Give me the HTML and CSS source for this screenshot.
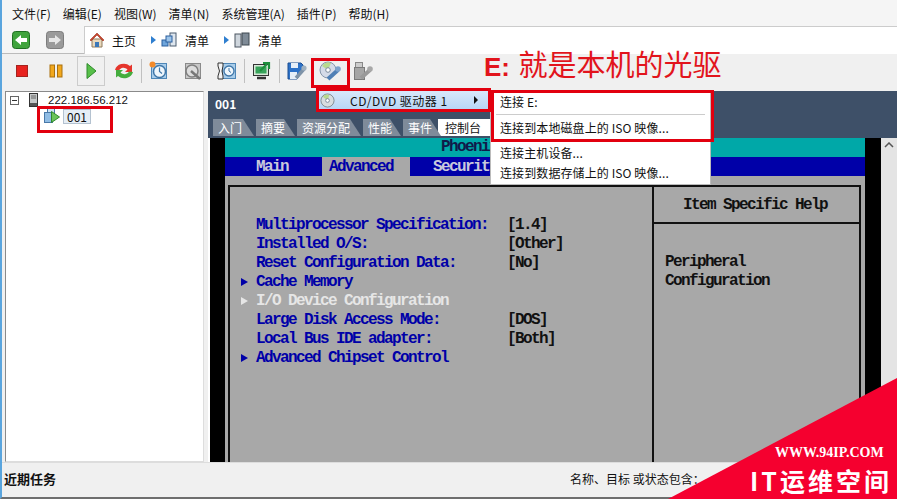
FILE: index.html
```html
<!DOCTYPE html>
<html lang="zh-CN">
<head>
    <meta charset="UTF-8">
    <title>vSphere Client</title>
    <link rel="stylesheet" href="styles.css">
</head>
<body>
<div class="app">
    <div class="menubar">
        <span>文件(F)</span><span>编辑(E)</span><span>视图(W)</span><span>清单(N)</span><span>系统管理(A)</span><span>插件(P)</span><span>帮助(H)</span>
    </div>

    <div class="navbar">
        <svg class="nav-btn" viewBox="0 0 18 18"><rect x="0.5" y="0.5" width="17" height="17" rx="3" fill="#3fa33c" stroke="#1f6e22"/><path d="M3 9 9 4v3h6v4H9v3z" fill="#fff"/></svg>
        <svg class="nav-btn nav-next" viewBox="0 0 18 18"><rect x="0.5" y="0.5" width="17" height="17" rx="3" fill="#9a9a9a" stroke="#7d7d7d"/><path d="M15 9 9 4v3H3v4h6v3z" fill="#e6e6e6"/></svg>
        <div class="crumbs">
            <svg class="crumb-icon" viewBox="0 0 16 16"><path d="M3 7v8h10V7z" fill="#ead9bd" stroke="#8f7a5c"/><path d="M8 1 1 8l1 1 6-6 6 6 1-1z" fill="#c8452f" stroke="#a03420" stroke-width="0.6"/><rect x="6" y="10" width="4" height="5" fill="#3c78b8"/></svg>
            <span class="crumb-home">主页</span>
            <span class="crumb-arrow"></span>
            <svg class="crumb-icon" viewBox="0 0 16 16"><rect x="9" y="1" width="6" height="13" fill="#dfe7ef" stroke="#4b5c70"/><rect x="1" y="8" width="6" height="6" fill="#6fa6dc" stroke="#2a5f9e"/><rect x="5" y="4" width="6" height="6" fill="#9cc4ea" stroke="#2a5f9e"/></svg>
            <span class="crumb-text">清单</span>
            <span class="crumb-arrow"></span>
            <svg class="crumb-icon" viewBox="0 0 16 16"><rect x="1" y="2" width="6" height="13" fill="#cfd6dd" stroke="#4b5560"/><rect x="8" y="1" width="7" height="12" fill="#7f8b97" stroke="#3f4850"/></svg>
            <span class="crumb-text">清单</span>
        </div>
    </div>

    <div class="toolbar">
        <div class="tool"><svg viewBox="0 0 20 20"><rect x="4.500" y="4.500" width="11" height="11" fill="#e8231f" stroke="#a5241f"/></svg></div>
        <div class="tool"><svg viewBox="0 0 20 20"><rect x="4" y="4" width="4.500" height="12" fill="#f2a81d" stroke="#a9700f"/><rect x="11.500" y="4" width="4.500" height="12" fill="#f2a81d" stroke="#a9700f"/></svg></div>
        <div class="tool tool-on"><svg viewBox="0 0 20 20"><path d="M6 2.500 15 10 6 17.500z" fill="#58c04a" stroke="#2f8a2c"/></svg></div>
        <div class="tool"><svg viewBox="0 0 20 20"><path d="M1 9a9 8 0 0 1 15-4l2-1.500V11h-7l2.500-2.500a5 4.500 0 0 0-8.500 1z" fill="#e5352c"/><path d="M19 11a9 8 0 0 1-15 4l-2 1.500V9h7l-2.500 2.500a5 4.500 0 0 0 8.500-1z" fill="#45ad3e"/></svg></div>
        <i class="tool-sep"></i>
        <div class="tool"><svg viewBox="0 0 20 20"><rect x="2.500" y="2.500" width="15" height="15" fill="#a9cdea" stroke="#4f87b7"/><circle cx="10.500" cy="10.500" r="6" fill="#eef6fc" stroke="#3f76a8" stroke-width="1.500"/><path d="M10.500 6.500v4l2.500 2" fill="none" stroke="#3f76a8" stroke-width="1.200"/><circle cx="3.500" cy="3.500" r="3" fill="#f28a2a"/></svg></div>
        <div class="tool"><svg viewBox="0 0 20 20"><rect x="2.500" y="2.500" width="15" height="15" fill="#c8c8c8" stroke="#8a8a8a"/><circle cx="9" cy="10" r="6" fill="#ddd" stroke="#808080" stroke-width="1.500"/><path d="m8 10 9 8" stroke="#777" stroke-width="2.500"/></svg></div>
        <div class="tool"><svg viewBox="0 0 20 20"><rect x="5.500" y="2.500" width="13" height="15" fill="#a9cdea" stroke="#4f87b7"/><path d="M1 2h5v3L5 10l1 5v3H1v-3l1.500-5L1 5z" fill="#f3f3f3" stroke="#333"/><circle cx="12" cy="10" r="5" fill="#eef6fc" stroke="#3f76a8" stroke-width="1.300"/><path d="M12 7v3l2 1.500" fill="none" stroke="#3f76a8"/></svg></div>
        <i class="tool-sep"></i>
        <div class="tool"><svg viewBox="0 0 20 20"><rect x="1.500" y="3.500" width="15" height="11" fill="#d8e8d8" stroke="#333"/><rect x="3.500" y="5.500" width="11" height="7" fill="#37a35a"/><path d="M5 17h9" stroke="#333" stroke-width="2.500"/><path d="M8 10 15 3M11 2h6v6" stroke="#1d8f3c" stroke-width="2.200" fill="none"/></svg></div>
        <i class="tool-sep"></i>
        <div class="tool"><svg viewBox="0 0 20 20"><path d="M1 2h13l2 2v5l-6 9H1z" fill="#2d72c8" stroke="#1c4f92"/><rect x="4" y="2" width="7" height="5" fill="#e7eff8"/><rect x="3" y="11" width="7" height="7" fill="#e7eff8"/><path d="m9 17 8-9" stroke="#7e93a8" stroke-width="3.500"/><circle cx="17" cy="7" r="2.600" fill="#9fb0bf"/></svg></div>
        <div class="tool tool-cd"><svg viewBox="0 0 22 20"><circle cx="9" cy="9" r="8" fill="#d5dbe8" stroke="#8595ab"/><path d="M9 9 3 5a7 7 0 0 1 9-3z" fill="#b9d98e"/><circle cx="9" cy="9" r="2.300" fill="#fff" stroke="#7c8a9c"/><path d="m9 18 10-9" stroke="#4f7fb5" stroke-width="4"/><circle cx="19" cy="8" r="2.800" fill="#7ca2cd"/></svg></div>
        <div class="tool tool-usb"><svg viewBox="0 0 22 20"><rect x="3.500" y="1.500" width="7" height="5" fill="#ccc" stroke="#888"/><rect x="2.500" y="6.500" width="10" height="12" fill="#a5a5a5" stroke="#7a7a7a"/><path d="m9 17 9-8" stroke="#999" stroke-width="4"/><circle cx="18" cy="8" r="2.800" fill="#a8a8a8"/></svg></div>
    </div>

    <div class="main">
        <div class="tree">
            <div class="tree-host">
                <span class="tree-toggle"></span>
                <svg class="tree-server" viewBox="0 0 9 14"><rect x="0.5" y="0.5" width="8" height="13" fill="#c5c8c8" stroke="#333"/><path d="M2 3h5M2 5h5" stroke="#666"/><rect x="1" y="10" width="7" height="3" fill="#555"/></svg>
                <span class="tree-ip">222.186.56.212</span>
            </div>
            <div class="tree-vm">
                <svg viewBox="0 0 16 16"><rect x="3.500" y="0.500" width="7" height="8" fill="#cfe2f3" stroke="#4878a8"/><rect x="0.500" y="4.500" width="8" height="10" fill="#8fbce4" stroke="#4878a8"/><path d="M7.500 3.500 15.500 9l-8 5.500z" fill="#6ac45a" stroke="#2f8a2c"/></svg>
                <span class="tree-label">001</span>
            </div>
        </div>

        <div class="detail">
            <div class="detail-title">001</div>
            <div class="tabs">
                <span class="tab tab-w1">入门</span>
                <span class="tab tab-w2">摘要</span>
                <span class="tab tab-w3">资源分配</span>
                <span class="tab tab-w4">性能</span>
                <span class="tab tab-w4">事件</span>
                <span class="tab tab-on">控制台</span>
            </div>
            <div class="console">
                <div class="bios">
                    <div class="bios-title">Phoenix</div>
                    <div class="bios-menu">
                        <span class="bios-menu-main">Main</span>
                        <span class="bios-menu-on">Advanced</span>
                        <span>Security</span>
                    </div>
                    <div class="bios-body">
                        <div class="bios-frame">
                            <div class="bios-list">
                                <div class="bios-row"><span class="bios-key">Multiprocessor Specification:</span><span class="bios-val">[1.4]</span></div>
                                <div class="bios-row"><span class="bios-key">Installed O/S:</span><span class="bios-val">[Other]</span></div>
                                <div class="bios-row"><span class="bios-key">Reset Configuration Data:</span><span class="bios-val">[No]</span></div>
                                <div class="bios-row bios-sub"><span class="bios-key">Cache Memory</span></div>
                                <div class="bios-row bios-sub bios-sel"><span class="bios-key">I/O Device Configuration</span></div>
                                <div class="bios-row"><span class="bios-key">Large Disk Access Mode:</span><span class="bios-val">[DOS]</span></div>
                                <div class="bios-row"><span class="bios-key">Local Bus IDE adapter:</span><span class="bios-val">[Both]</span></div>
                                <div class="bios-row bios-sub"><span class="bios-key">Advanced Chipset Control</span></div>
                            </div>
                            <div class="bios-help">
                                <div class="bios-help-head">Item Specific Help</div>
                                <div class="bios-help-text">Peripheral<br>Configuration</div>
                            </div>
                        </div>
                    </div>
                </div>
                <div class="scroll"><svg viewBox="0 0 10 6"><path d="M1 5 5 1l4 4" fill="none" stroke="#555" stroke-width="1.500"/></svg></div>
            </div>
        </div>
    </div>

    <div class="tasks">
        <b>近期任务</b>
        <span>名称、目标 或状态包含：</span>
    </div>
</div>

<div class="ctx-menu">
    <svg viewBox="0 0 16 16"><circle cx="8" cy="8" r="7" fill="#d8dde0" stroke="#7e8a90"/><path d="M8 8 3 4a6 6 0 0 1 7-2z" fill="#b9d98e"/><circle cx="8" cy="8" r="2" fill="#fff" stroke="#7c8a9c"/></svg>
    <span>CD/DVD 驱动器 1</span>
    <i class="ctx-arrow"></i>
</div>
<div class="sub-menu">
    <div class="sub-item sub-first">连接 E:</div>
    <hr>
    <div class="sub-item">连接到本地磁盘上的 ISO 映像...</div>
    <div class="sub-gap"></div>
    <div class="sub-item">连接主机设备...</div>
    <div class="sub-item">连接到数据存储上的 ISO 映像...</div>
</div>

<div class="mark mark-cd"></div>
<div class="mark mark-menu"></div>
<div class="mark mark-sub"></div>
<div class="mark mark-vm"></div>
<div class="note"><b>E:</b> 就是本机的光驱</div>

<div class="stamp">
    <div class="stamp-url">WWW.94IP.COM</div>
    <div class="stamp-name">IT运维空间</div>
</div>
</body>
</html>
```

FILE: styles.css
```css
* {
    box-sizing: border-box;
}
html, body {
    margin: 0;
    height: 499px;
    overflow: hidden;
}
body {
    font-family: "Noto Sans CJK SC", "Liberation Sans", sans-serif;
    font-size: 12px;
    color: #111;
    background-color: #f0f0f0;
}
.app {
    width: 897px;
    height: 499px;
    display: flex;
    flex-direction: column;
    border-left: 2px solid #5aa5de;
    border-bottom: 2px solid #6e6e6e;
}

/* top bars */
.menubar {
    height: 26px;
    display: flex;
    align-items: center;
    gap: 12px;
    padding-left: 10px;
    background-color: #f5f5f5;
}
.navbar {
    height: 28px;
    display: flex;
    align-items: center;
    padding-left: 10px;
    background-color: #f5f5f5;
    border-bottom: 1px solid #bbb;
}
.nav-btn {
    width: 18px;
    height: 18px;
}
.nav-next {
    margin-left: 16px;
}
.crumbs {
    flex: 1;
    height: 28px;
    margin-left: 20px;
    display: flex;
    align-items: center;
    background-color: #fff;
    border-left: 1px solid #ccc;
    border-top: 1px solid #ccc;
    padding-left: 4px;
}
.crumb-icon {
    width: 16px;
    height: 16px;
}
.crumb-home {
    margin-left: 7px;
}
.crumb-text {
    margin-left: 8px;
}
.crumb-arrow {
    width: 0;
    height: 0;
    margin: 0 5px 0 15px;
    border-left: 5px solid #2f7fd0;
    border-top: 4px solid transparent;
    border-bottom: 4px solid transparent;
}
.toolbar {
    height: 34px;
    display: flex;
    align-items: center;
    padding-left: 3px;
    background-color: #f0f0f0;
}
.tool {
    width: 34px;
    height: 30px;
    display: flex;
    align-items: center;
    justify-content: center;
}
.tool svg {
    width: 20px;
    height: 20px;
}
.tool-on {
    width: 28px;
    margin: 0 2px 0 4px;
    border: 1px solid #ccc;
}
.tool-cd, .tool-usb {
    margin-left: -1px;
}
.tool-cd svg, .tool-usb svg {
    width: 22px;
}
.tool-sep {
    width: 1px;
    height: 24px;
    background-color: #c0c0c0;
}

/* tree and detail */
.main {
    flex: 1;
    min-height: 0;
    display: flex;
    padding: 3px 0 0 3px;
}
.tree {
    width: 199px;
    border: 1px solid #8a8a8a;
    border-right-color: #ddd;
    border-bottom-color: #ddd;
    background-color: #fff;
    padding: 1px 0 0 4px;
}
.tree-host {
    display: flex;
    align-items: center;
    height: 14px;
}
.tree-ip {
    font-size: 11.5px;
    font-family: "Liberation Sans", sans-serif;
}
.tree-toggle {
    width: 9px;
    height: 9px;
    border: 1px solid #666;
    background: linear-gradient(#333, #333) center / 5px 1px no-repeat;
}
.tree-server {
    width: 9px;
    height: 14px;
    margin: 0 10px 0 10px;
}
.tree-vm {
    display: flex;
    align-items: center;
    gap: 3px;
    margin: 1px 0 0 34px;
}
.tree-vm svg {
    width: 16px;
    height: 16px;
}
.tree-label {
    padding: 0 3px;
    height: 15px;
    line-height: 14px;
    background-color: #e6eef6;
    border: 1px solid #b4c2d0;
}
.detail {
    flex: 1;
    min-width: 0;
    margin-left: 4px;
    display: flex;
    flex-direction: column;
    background-color: #3e5068;
}
.detail-title {
    height: 28px;
    line-height: 26px;
    padding-left: 7px;
    font-weight: bold;
    color: #fff;
}
.tabs {
    height: 17px;
    display: flex;
    padding-left: 5px;
    gap: 2px;
}
.tab {
    height: 17px;
    line-height: 17px;
    padding-left: 5px;
    color: #fff;
    background-color: #7f8b9a;
    clip-path: polygon(0 0, calc(100% - 11px) 0, 100% 100%, 0 100%);
}
.tab-w1 { width: 41px; }
.tab-w2 { width: 39px; }
.tab-w3 { width: 64px; }
.tab-w4 { width: 38px; }
.tab-on {
    width: 53px;
    margin-left: -5px;
    padding-left: 7px;
    color: #111;
    background-color: #fff;
    clip-path: none;
}
.console {
    flex: 1;
    min-height: 0;
    margin-top: 2px;
    display: flex;
    padding-left: 2px;
    background-color: #fff;
}
.bios {
    flex: 1;
    min-width: 0;
    display: flex;
    flex-direction: column;
    padding: 0 16px 0 15px;
    background-color: #000;
    font-family: "Liberation Mono", "DejaVu Sans Mono", monospace;
    font-size: 16px;
    letter-spacing: -1.6px;
    font-weight: bold;
}
.scroll {
    width: 16px;
    height: 100%;
    padding: 4px 3px;
    background-color: #e4e4e4;
}
.scroll svg {
    display: block;
    width: 10px;
    height: 6px;
}

/* bios screen */
.bios-title {
    height: 19px;
    line-height: 18px;
    padding-left: 216px;
    color: #111a4a;
    background-color: #00a8a8;
}
.bios-menu {
    height: 19px;
    line-height: 21px;
    display: flex;
    color: #c8c8dc;
    background-color: #0000a8;
}
.bios-menu-main {
    width: 97px;
    padding-left: 31px;
}
.bios-menu-on {
    width: 88px;
    padding-left: 7px;
    color: #0000a8;
    background-color: #a8a8a8;
}
.bios-menu span:last-child {
    padding-left: 23px;
}
.bios-body {
    flex: 1;
    min-height: 0;
    padding: 9px 4px 0 3px;
    background-color: #a8a8a8;
}
.bios-frame {
    height: 100%;
    display: flex;
    border: 2px solid #111;
    border-bottom: none;
}
.bios-list {
    width: 424px;
    padding: 29px 0 0 26px;
    border-right: 2px solid #111;
    color: #0000a8;
}
.bios-row {
    position: relative;
    height: 19px;
    line-height: 19px;
    display: flex;
}
.bios-key {
    width: 251px;
    white-space: nowrap;
}
.bios-sub::before {
    content: "";
    position: absolute;
    left: -15px;
    top: 5px;
    border-left: 7px solid #0000a8;
    border-top: 4.500px solid transparent;
    border-bottom: 4.500px solid transparent;
}
.bios-sel {
    color: #e6e6e6;
}
.bios-sel::before {
    border-left-color: #e6e6e6;
}
.bios-val {
    color: #111;
}
.bios-help {
    flex: 1;
    color: #111;
}
.bios-help-head {
    height: 37px;
    line-height: 37px;
    text-align: center;
    padding-right: 3px;
    border-bottom: 2px solid #111;
}
.bios-help-text {
    padding: 29px 0 0 11px;
    line-height: 19px;
}

/* bottom bar */
.tasks {
    height: 35px;
    display: flex;
    align-items: center;
    padding: 0 0 3px 2px;
    background-color: #f0f0f0;
    border-top: 1px solid #ddd;
}
.tasks b {
    font-size: 13px;
}
.tasks span {
    margin-left: 514px;
}

/* popup menus */
.ctx-menu {
    position: absolute;
    left: 316px;
    top: 90px;
    width: 173px;
    height: 20px;
    display: flex;
    align-items: center;
    padding-left: 3px;
    background: linear-gradient(#d8e8fa, #b8d6f6);
    border: 1px solid #84acdd;
}
.ctx-menu svg {
    width: 15px;
    height: 15px;
}
.ctx-menu span {
    margin-left: 15px;
    letter-spacing: 0.5px;
}
.ctx-arrow {
    margin-left: 26px;
    border-left: 4px solid #111;
    border-top: 4px solid transparent;
    border-bottom: 4px solid transparent;
}
.sub-menu {
    position: absolute;
    left: 490px;
    top: 91px;
    width: 221px;
    height: 94px;
    padding: 0 0 0 9px;
    letter-spacing: 0.1px;
    background-color: #fff;
    border: 1px solid #bbb;
}
.sub-item {
    height: 20px;
    line-height: 20px;
    white-space: nowrap;
}
.sub-first {
    line-height: 18px;
    margin-top: 1px;
}
.sub-menu hr {
    margin: 1px 5px 3px -4px;
    border: none;
    border-top: 1px solid #ccc;
}
.sub-gap {
    height: 5px;
}
.mark {
    position: absolute;
    border: 3px solid #e2000f;
}
.mark-cd { left: 311px; top: 58px; width: 39px; height: 30px; }
.mark-menu { left: 316px; top: 88px; width: 175px; height: 24px; }
.mark-sub { left: 491px; top: 90px; width: 223px; height: 52px; }
.mark-vm { left: 37px; top: 106px; width: 76px; height: 27px; }
.note {
    position: absolute;
    left: 484px;
    top: 45px;
    font-size: 29px;
    line-height: 36px;
    color: #e2141c;
    white-space: nowrap;
    word-spacing: 2px;
}
.note b {
    font-family: "Liberation Sans", sans-serif;
    font-size: 26px;
}

/* corner stamp */
.stamp {
    position: absolute;
    left: 668px;
    top: 378px;
    width: 229px;
    height: 121px;
    background-color: #f5002f;
    color: #fff;
    clip-path: polygon(100% 0, 100% 100%, 0 100%);
}
.stamp-url {
    position: absolute;
    left: 107px;
    top: 67px;
    font-family: "Liberation Serif", serif;
    font-size: 14px;
    font-weight: bold;
    white-space: nowrap;
}
.stamp-name {
    position: absolute;
    left: 82px;
    top: 85px;
    font-size: 25px;
    line-height: 34px;
    font-weight: bold;
    letter-spacing: 3px;
    white-space: nowrap;
}
```
